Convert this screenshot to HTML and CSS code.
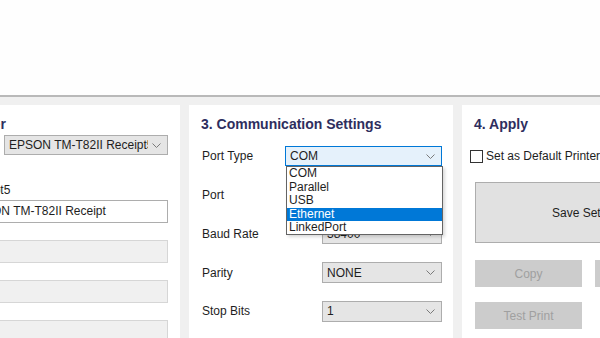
FILE: index.html
```html
<!DOCTYPE html>
<html lang="en">
<head>
    <meta charset="UTF-8">
    <title>Printer Setup</title>
    <link rel="stylesheet" href="styles.css">
</head>
<body>
    <div class="top-bar"></div>

    <div class="main">
        <div class="panel panel-printer">
            <div class="panel-title">2. Select Printer</div>
            <div class="printer-row">
                <span class="printer-label">Printer</span>
                <div class="select">
                    <span class="select-text">EPSON TM-T82II Receipt5</span>
                    <svg class="chevron" width="9" height="5" viewBox="0 0 9 5"><polyline points="0.5,0.5 4.5,4.5 8.5,0.5" fill="none" stroke="#7a7a7a" stroke-width="1"/></svg>
                </div>
            </div>
            <div class="printer-fields">
                <div class="field-label">Receipt5</div>
                <div class="text-input">EPSON TM-T82II Receipt</div>
                <div class="text-input disabled"></div>
                <div class="text-input disabled"></div>
                <div class="text-input disabled"></div>
            </div>
        </div>

        <div class="panel panel-comm">
            <div class="panel-title">3. Communication Settings</div>
            <div class="setting-row">
                <span class="setting-label">Port Type</span>
                <div class="select select-wide active">
                    <span class="select-text">COM</span>
                    <svg class="chevron" width="9" height="5" viewBox="0 0 9 5"><polyline points="0.5,0.5 4.5,4.5 8.5,0.5" fill="none" stroke="#7a7a7a" stroke-width="1"/></svg>
                    <ul class="dropdown">
                        <li>COM</li>
                        <li>Parallel</li>
                        <li>USB</li>
                        <li class="selected">Ethernet</li>
                        <li>LinkedPort</li>
                    </ul>
                </div>
            </div>
            <div class="setting-row">
                <span class="setting-label">Port</span>
                <div class="select">
                    <span class="select-text">COM1</span>
                    <svg class="chevron" width="9" height="5" viewBox="0 0 9 5"><polyline points="0.5,0.5 4.5,4.5 8.5,0.5" fill="none" stroke="#7a7a7a" stroke-width="1"/></svg>
                </div>
            </div>
            <div class="setting-row">
                <span class="setting-label">Baud Rate</span>
                <div class="select">
                    <span class="select-text">38400</span>
                    <svg class="chevron" width="9" height="5" viewBox="0 0 9 5"><polyline points="0.5,0.5 4.5,4.5 8.5,0.5" fill="none" stroke="#7a7a7a" stroke-width="1"/></svg>
                </div>
            </div>
            <div class="setting-row">
                <span class="setting-label">Parity</span>
                <div class="select">
                    <span class="select-text">NONE</span>
                    <svg class="chevron" width="9" height="5" viewBox="0 0 9 5"><polyline points="0.5,0.5 4.5,4.5 8.5,0.5" fill="none" stroke="#7a7a7a" stroke-width="1"/></svg>
                </div>
            </div>
            <div class="setting-row">
                <span class="setting-label">Stop Bits</span>
                <div class="select">
                    <span class="select-text">1</span>
                    <svg class="chevron" width="9" height="5" viewBox="0 0 9 5"><polyline points="0.5,0.5 4.5,4.5 8.5,0.5" fill="none" stroke="#7a7a7a" stroke-width="1"/></svg>
                </div>
            </div>
        </div>

        <div class="panel panel-apply">
            <div class="panel-title">4. Apply</div>
            <label class="check-row">
                <span class="checkbox"></span>
                <span>Set as Default Printer</span>
            </label>
            <button class="btn btn-save">Save Settings</button>
            <div class="btn-row">
                <button class="btn btn-small" disabled>Copy</button>
                <button class="btn btn-small" disabled>Paste</button>
            </div>
            <div class="btn-row">
                <button class="btn btn-small" disabled>Test Print</button>
            </div>
        </div>
    </div>
</body>
</html>
```

FILE: styles.css
```css
body {
    margin: 0;
    font-family: "Liberation Sans", "Noto Sans CJK JP", sans-serif;
    font-size: 12px;
    color: #1e1e1e;
    background: #f0f0f0;
    overflow: hidden;
}
.top-bar {
    height: 95px;
    background: #fefefe;
    border-bottom: 2px solid #b9b9b9;
}
.main {
    display: flex;
    gap: 9px;
    margin-left: -120px;
    padding-top: 8px;
    height: 300px;
}
.panel {
    background: #ffffff;
    box-sizing: border-box;
    flex-shrink: 0;
    padding: 10px 12px 0 12px;
}
.panel-title {
    font-size: 14px;
    font-weight: bold;
    line-height: 18px;
    color: #2e2e5e;
    height: 18px;
}
.panel-printer {
    width: 300px;
}
.panel-printer .panel-title {
    padding-left: 8px;
}
.printer-row {
    display: flex;
    align-items: center;
    margin-top: 2px;
}
.printer-label {
    width: 112px;
}
.select {
    position: relative;
    display: flex;
    align-items: center;
    justify-content: space-between;
    box-sizing: border-box;
    width: 120px;
    height: 21px;
    padding: 0 6px 0 4px;
    background: #e5e5e5;
    border: 1px solid #adadad;
}
.panel-printer .select {
    flex: 1;
    height: 20px;
}
.select-text {
    white-space: nowrap;
    overflow: hidden;
}
.chevron {
    flex-shrink: 0;
    margin-left: 4px;
}
.printer-fields {
    margin-left: 71px;
    margin-top: 28px;
}
.field-label {
    line-height: 14px;
    height: 17px;
}
.text-input {
    box-sizing: border-box;
    height: 23px;
    line-height: 21px;
    padding: 0 4px;
    background: #ffffff;
    border: 1px solid #adadad;
    margin-bottom: 17px;
    white-space: nowrap;
}
.text-input.disabled {
    background: #f0f0f0;
    border-color: #d6d6d6;
}
.panel-comm {
    width: 264px;
    padding-right: 11px;
}
.setting-row {
    display: flex;
    align-items: center;
    justify-content: space-between;
    height: 38.75px;
}
.panel-title + .setting-row {
    margin-top: 4px;
}
.setting-label {
    padding-left: 1px;
}
.select-wide {
    width: 157px;
    height: 20px;
}
.select.active {
    background: #e5f1fb;
    border-color: #0078d7;
}
.dropdown {
    position: absolute;
    top: 19px;
    left: 0;
    width: 157px;
    box-sizing: border-box;
    margin: 0;
    padding: 0;
    list-style: none;
    background: #ffffff;
    border: 1px solid #646464;
    box-shadow: 2px 2px 3px rgba(0, 0, 0, 0.15);
    z-index: 2;
}
.dropdown li {
    line-height: 13.4px;
    padding-left: 2px;
}
.dropdown li.selected {
    background: #0078d7;
    color: #ffffff;
}
.panel-apply {
    width: 254px;
    padding-left: 8px;
    padding-right: 13px;
}
.panel-apply .panel-title {
    padding-left: 4px;
}
.check-row {
    display: flex;
    align-items: center;
    gap: 3px;
    margin-top: 14px;
    height: 18px;
}
.checkbox {
    width: 11px;
    height: 11px;
    border: 1px solid #333333;
    background: #ffffff;
}
.btn {
    font-family: inherit;
    font-size: 12px;
    box-sizing: border-box;
    border: 1px solid #adadad;
    background: #e1e1e1;
    color: #1e1e1e;
    padding: 0;
}
.btn-save {
    display: block;
    width: 228px;
    height: 61px;
    margin: 17px 0 0 5px;
}
.btn-row {
    display: flex;
    gap: 13px;
    margin-left: 5px;
    margin-top: 17px;
}
.btn-row + .btn-row {
    margin-top: 15px;
}
.btn-small {
    width: 107px;
    height: 27px;
    background: #cccccc;
    border-color: #cccccc;
    color: #a0a0a0;
}
```
